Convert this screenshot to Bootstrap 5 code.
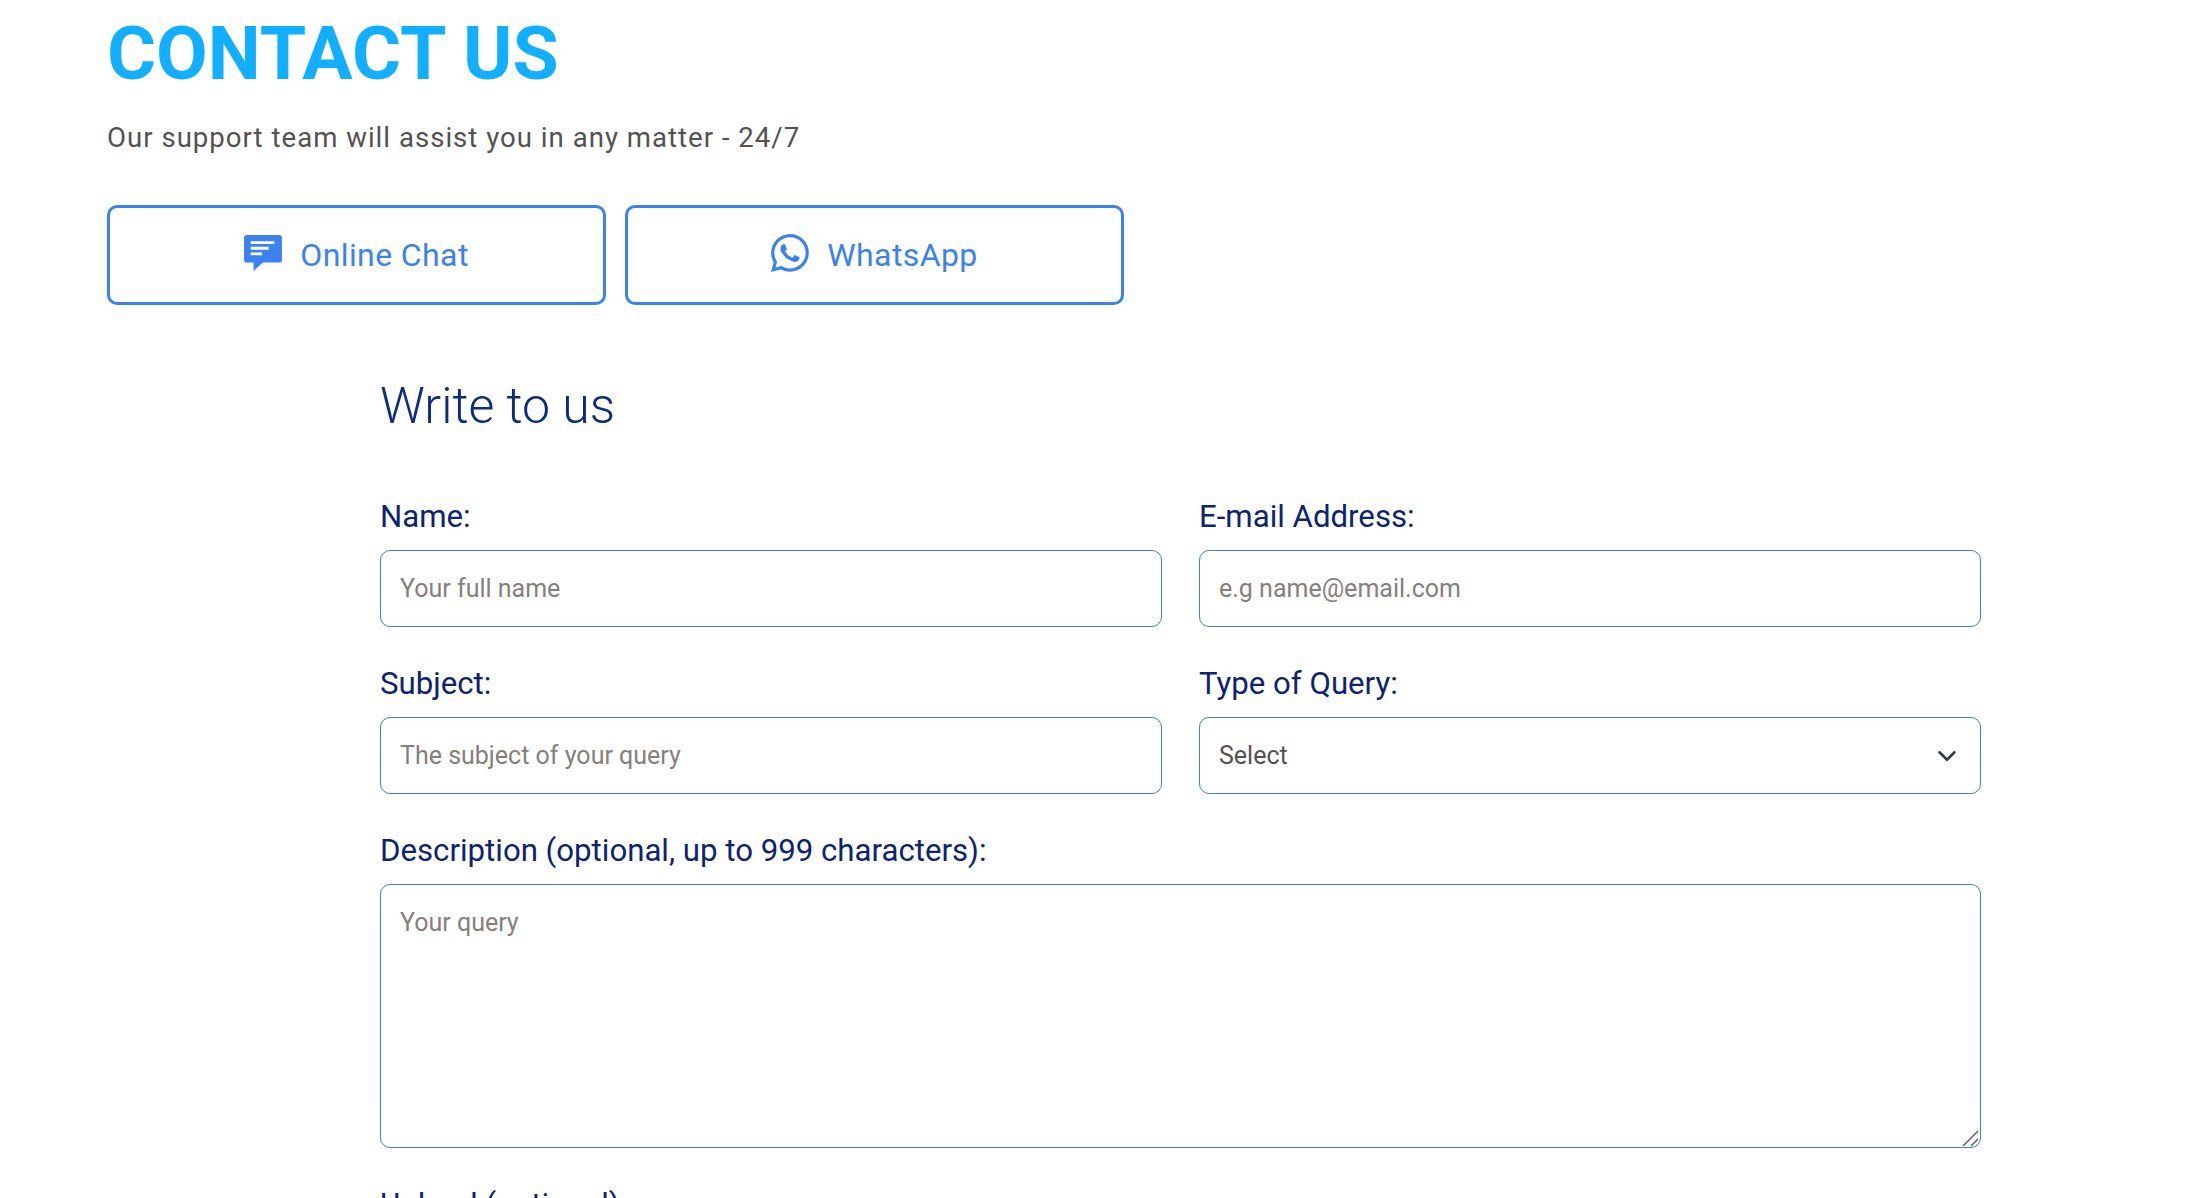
<!DOCTYPE html>
<html lang="en">

<head>
    <meta charset="UTF-8" />
    <meta name="viewport" content="width=device-width, initial-scale=1.0" />
    <title>Contact Us</title>
    <link href="https://cdn.jsdelivr.net/npm/bootstrap@5.3.2/dist/css/bootstrap.min.css" rel="stylesheet">
    <style>
        html, body { height: 100%; overflow: hidden; }
        body { font-family: Roboto, "Liberation Sans", sans-serif; background: #fff; }
        .page-wrap { padding: 0 107px; }
        .contact-title { font-size: 75px; font-weight: 700; line-height: 88px; color: #12aeff; margin: 9px 0 0; }
        .contact-sub { font-size: 27.6px; line-height: 36px; letter-spacing: 1px; color: #55514e; margin: 23px 0 0; }
        .contact-btns { margin-top: 49px; gap: 19px; }
        .contact-btn { width: 499px; height: 100px; border: 3px solid #3b82f0; border-radius: 10px; color: #3b82f0; font-size: 32px; letter-spacing: .4px; background: #fff; gap: 18px; }
        .contact-btn:hover { color: #3b82f0; border-color: #3b82f0; }
        .contact-btn svg { margin-bottom: 4px; }
        .form-wrap { margin: 71px 106px 0 273px; }
        .form-heading { font-size: 50px; font-weight: 300; line-height: 60px; color: #0d2b80; margin: 0 0 63px; }
        .form-grid { display: grid; grid-template-columns: 1fr 1fr; column-gap: 37px; row-gap: 39px; }
        .form-wrap .form-label { font-size: 31.2px; line-height: 36px; color: #0d2372; margin-bottom: 15px; display: block; }
        .form-wrap .form-control, .form-wrap .form-select { height: 77px; font-size: 25px; padding: 0 19px; color: #55514e; border: 1px solid #3f7fcf; border-radius: 10px; box-shadow: none; }
        .form-wrap .form-select { background-size: 20px 20px; background-position: right 23px center; }
        .form-wrap textarea.form-control { height: 264px; padding: 19px; resize: none; }
        .form-wrap .form-control::placeholder { color: #85807b; opacity: 1; }
        .span-both { grid-column: 1 / 3; }
        .resize-grip { position: absolute; right: 1px; bottom: 1px; }
    </style>
</head>

<body>
    <div class="page-wrap">
        <h1 class="contact-title">CONTACT US</h1>
        <p class="contact-sub">Our support team will assist you in any matter - 24/7</p>

        <div class="d-flex contact-btns">
            <a href="#" class="btn contact-btn d-flex align-items-center justify-content-center">
                <svg width="38" height="36" viewBox="0 0 40 38" fill="none">
                    <path fill="#3b82f0" d="M3 0h34a3 3 0 0 1 3 3v23a3 3 0 0 1-3 3H20l-10 9v-9H3a3 3 0 0 1-3-3V3a3 3 0 0 1 3-3z" />
                    <path stroke="#fff" stroke-width="3" d="M7 8h25M7 14h19M7 20h12" />
                </svg>
                Online Chat
            </a>
            <a href="#" class="btn contact-btn d-flex align-items-center justify-content-center">
                <svg width="38" height="40" viewBox="0 0 16 16" fill="#3b82f0">
                    <path d="M13.601 2.326A7.854 7.854 0 0 0 7.994 0C3.627 0 .068 3.558.064 7.926c0 1.399.366 2.76 1.057 3.965L0 16l4.204-1.102a7.933 7.933 0 0 0 3.79.965h.004c4.368 0 7.926-3.558 7.93-7.93A7.898 7.898 0 0 0 13.6 2.326zM7.994 14.521a6.573 6.573 0 0 1-3.356-.92l-.24-.144-2.494.654.666-2.433-.156-.251a6.56 6.56 0 0 1-1.007-3.505c0-3.626 2.957-6.584 6.591-6.584a6.56 6.56 0 0 1 4.66 1.931 6.557 6.557 0 0 1 1.928 4.66c-.004 3.639-2.961 6.592-6.592 6.592zm3.615-4.934c-.197-.099-1.17-.578-1.353-.646-.182-.065-.315-.099-.445.099-.133.197-.513.646-.627.775-.114.133-.232.148-.43.05-.197-.1-.836-.308-1.592-.985-.59-.525-.985-1.175-1.103-1.372-.114-.198-.011-.304.088-.403.087-.088.197-.232.296-.346.1-.114.133-.198.198-.33.065-.134.034-.248-.015-.347-.05-.099-.445-1.076-.612-1.47-.16-.389-.323-.335-.445-.34-.114-.007-.247-.007-.38-.007a.729.729 0 0 0-.529.247c-.182.198-.691.677-.691 1.654 0 .977.71 1.916.81 2.049.098.133 1.394 2.132 3.383 2.992.47.205.84.326 1.129.418.475.152.904.129 1.246.08.38-.058 1.171-.48 1.338-.943.164-.464.164-.86.114-.943-.049-.084-.182-.133-.38-.232z" />
                </svg>
                WhatsApp
            </a>
        </div>

        <form class="form-wrap">
            <h2 class="form-heading">Write to us</h2>
            <div class="form-grid">
                <div>
                    <label class="form-label" for="name">Name:</label>
                    <input type="text" id="name" class="form-control" placeholder="Your full name" />
                </div>
                <div>
                    <label class="form-label" for="email">E-mail Address:</label>
                    <input type="email" id="email" class="form-control" placeholder="e.g name@email.com" />
                </div>
                <div>
                    <label class="form-label" for="subject">Subject:</label>
                    <input type="text" id="subject" class="form-control" placeholder="The subject of your query" />
                </div>
                <div>
                    <label class="form-label" for="queryType">Type of Query:</label>
                    <select id="queryType" class="form-select">
                        <option>Select</option>
                    </select>
                </div>
                <div class="span-both">
                    <label class="form-label" for="description">Description (optional, up to 999 characters):</label>
                    <div class="position-relative">
                        <textarea id="description" class="form-control" placeholder="Your query"></textarea>
                        <svg class="resize-grip" width="18" height="18" viewBox="0 0 18 18" fill="none" stroke="#666" stroke-width="1.6">
                            <path d="M1 17 16 2M9 17l7-7" />
                        </svg>
                    </div>
                </div>
                <div class="span-both">
                    <label class="form-label" for="upload">Upload (optional):</label>
                </div>
            </div>
        </form>
    </div>

    <script src="https://cdn.jsdelivr.net/npm/bootstrap@5.3.2/dist/js/bootstrap.bundle.min.js"></script>
</body>

</html>
